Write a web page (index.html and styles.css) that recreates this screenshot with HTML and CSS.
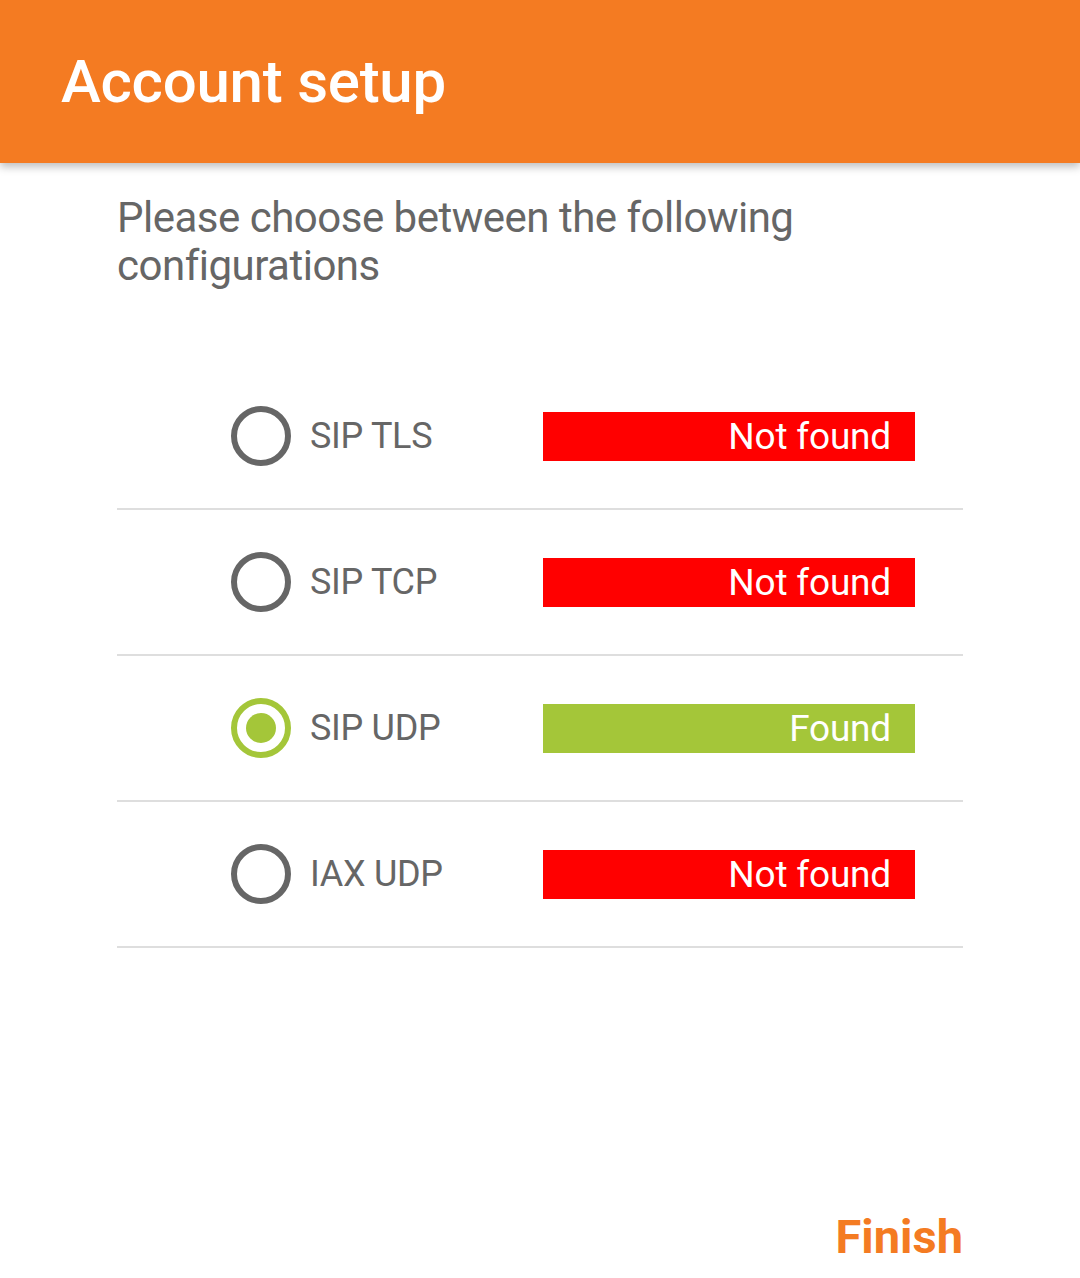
FILE: index.html
```html
<!DOCTYPE html>
<html>
<head>
<meta charset="utf-8">
<link rel="stylesheet" href="styles.css">
</head>
<body>
<header class="appbar"><h1 class="title">Account setup</h1></header>
<main class="content">
  <p class="intro">Please choose between the following configurations</p>
  <ul class="options">
    <li class="option">
      <span class="radio"></span><span class="label">SIP TLS</span>
      <span class="status status-bad">Not found</span>
    </li>
    <li class="option">
      <span class="radio"></span><span class="label">SIP TCP</span>
      <span class="status status-bad">Not found</span>
    </li>
    <li class="option">
      <span class="radio radio-on"></span><span class="label">SIP UDP</span>
      <span class="status status-ok">Found</span>
    </li>
    <li class="option">
      <span class="radio"></span><span class="label">IAX UDP</span>
      <span class="status status-bad">Not found</span>
    </li>
  </ul>
</main>
<footer class="actions"><button class="finish">Finish</button></footer>
</body>
</html>
```
FILE: styles.css
```css
* { box-sizing: border-box; }
html, body { margin: 0; padding: 0; }
body {
  width: 1080px;
  height: 1278px;
  background: #fff;
  font-family: Roboto, "Noto Sans", sans-serif;
  display: flex;
  flex-direction: column;
  overflow: hidden;
}
.appbar {
  height: 163px;
  background: #f47b22;
  box-shadow: 0 4px 8px rgba(0,0,0,0.25);
  display: flex;
  align-items: center;
  padding-left: 61px;
  position: relative;
  z-index: 1;
}
.title {
  margin: 0;
  color: #fff;
  font-size: 60px;
  font-weight: 500;
  letter-spacing: -0.25px;
}
.content {
  padding: 0 117px;
  flex: 1;
}
.intro {
  margin: 31px 0 0;
  color: #666;
  font-size: 42px;
  line-height: 48px;
  letter-spacing: -0.5px;
  width: 760px;
}
.options {
  list-style: none;
  margin: 74px 0 0;
  padding: 0;
}
.option {
  height: 146px;
  border-bottom: 2px solid #dedede;
  display: flex;
  align-items: center;
  padding-left: 114px;
}
.radio {
  width: 60px;
  height: 60px;
  border: 6px solid #666;
  border-radius: 50%;
  flex: none;
  display: flex;
  align-items: center;
  justify-content: center;
}
.radio-on { border-color: #a4c639; }
.radio-on::after {
  content: "";
  width: 30px;
  height: 30px;
  border-radius: 50%;
  background: #a4c639;
}
.label {
  margin-left: 19px;
  width: 233px;
  color: #666;
  font-size: 36px;
  letter-spacing: -0.3px;
}
.status {
  width: 372px;
  height: 49px;
  display: flex;
  align-items: center;
  justify-content: flex-end;
  padding-right: 24px;
  color: #fff;
  font-size: 37px;
  letter-spacing: -0.2px;
}
.status-bad { background: #ff0000; }
.status-ok { background: #a4c639; }
.actions {
  display: flex;
  justify-content: flex-end;
  padding: 0 117px 14px 0;
}
.finish {
  border: 0;
  background: none;
  padding: 0;
  color: #f47b22;
  font-family: Roboto, "Noto Sans", sans-serif;
  font-size: 47px;
  font-weight: 700;
  letter-spacing: 0;
}
```
